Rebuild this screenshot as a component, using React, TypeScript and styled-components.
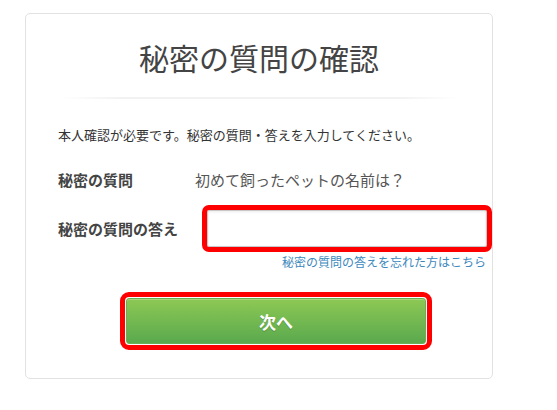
import React, { useState } from 'react';
import styled, { createGlobalStyle } from 'styled-components';

const GlobalStyle = createGlobalStyle`
  body {
    margin: 0;
    background: #ffffff;
    font-family: 'Noto Sans CJK JP', 'Noto Sans', sans-serif;
  }
`;

const Page = styled.div`
  padding: 13px 0 0 25px;
`;

const Card = styled.section`
  box-sizing: border-box;
  width: 468px;
  height: 366px;
  border: 1px solid #e2e2e2;
  border-radius: 5px;
  padding: 23px 6px 0 32px;
  display: flex;
  flex-direction: column;
`;

const Title = styled.h1`
  margin: 0 0 0 -26px;
  font-size: 30px;
  line-height: 40px;
  font-weight: 400;
  color: #444;
  text-align: center;
`;

const Divider = styled.div`
  height: 2px;
  margin: 20px 26px 0 2px;
  background: linear-gradient(to right, rgba(0, 0, 0, 0), rgba(0, 0, 0, 0.05) 15%, rgba(0, 0, 0, 0.05) 85%, rgba(0, 0, 0, 0));
`;

const Intro = styled.p`
  margin: 26px 0 0;
  font-size: 13px;
  line-height: 20px;
  color: #333;
`;

const Row = styled.div<{ $gap: number }>`
  display: grid;
  grid-template-columns: 137px 1fr;
  align-items: center;
  margin-top: ${p => p.$gap}px;
`;

const Label = styled.div`
  font-size: 15px;
  font-weight: 700;
  line-height: 24px;
  color: #444;
`;

const Value = styled.div`
  font-size: 15px;
  line-height: 24px;
  color: #555;
`;

const Field = styled.input`
  box-sizing: border-box;
  width: 280px;
  height: 37px;
  margin-left: 12px;
  border: 1px solid #c8c8c8;
  border-radius: 2px;
  box-shadow: inset 0 1px 3px rgba(0, 0, 0, 0.08);
  outline: 5px solid #ff0000;
  outline-offset: 0;
  font-size: 15px;
  padding: 0 8px;
`;

const Forgot = styled.a`
  align-self: flex-end;
  margin-top: 7px;
  font-size: 12px;
  line-height: 16px;
  color: #3d88bd;
  text-decoration: none;
`;

const NextButton = styled.button`
  box-sizing: border-box;
  width: 300px;
  height: 46px;
  margin: 28px 0 0 68px;
  border: 1px solid #6aae55;
  border-radius: 3px;
  background: linear-gradient(to bottom, #8dc854, #5aa94e);
  box-shadow: inset 0 1px 0 rgba(255, 255, 255, 0.25);
  outline: 5px solid #ff0000;
  outline-offset: 1px;
  color: #fff;
  font-family: inherit;
  font-size: 17px;
  font-weight: 700;
  text-shadow: 0 1px 1px rgba(0, 0, 0, 0.2);
  cursor: pointer;
`;

const App: React.FC = () => {
  const [answer, setAnswer] = useState('');

  return (
    <Page>
      <GlobalStyle />
      <Card>
        <Title>秘密の質問の確認</Title>
        <Divider />
        <Intro>本人確認が必要です。秘密の質問・答えを入力してください。</Intro>
        <Row $gap={23}>
          <Label>秘密の質問</Label>
          <Value>初めて飼ったペットの名前は？</Value>
        </Row>
        <Row $gap={18}>
          <Label>秘密の質問の答え</Label>
          <Field value={answer} onChange={e => setAnswer(e.target.value)} />
        </Row>
        <Forgot href="#">秘密の質問の答えを忘れた方はこちら</Forgot>
        <NextButton type="button">次へ</NextButton>
      </Card>
    </Page>
  );
};

export default App;
